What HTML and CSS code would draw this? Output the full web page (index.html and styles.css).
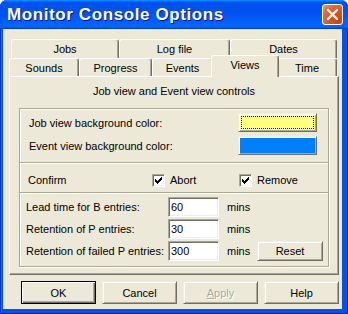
FILE: index.html
```html
<!DOCTYPE html>
<html lang="en">
<head>
    <meta charset="UTF-8">
    <title>Monitor Console Options</title>
    <link rel="stylesheet" href="styles.css">
</head>
<body>

<div class="window">
    <div class="titlebar">
        <span class="title">Monitor Console Options</span>
        <button class="close" title="Close">
            <svg width="13" height="13" viewBox="0 0 13 13">
                <path d="M2 2 L11 11 M11 2 L2 11" stroke="#fff" stroke-width="2.4" stroke-linecap="round" fill="none"/>
            </svg>
        </button>
    </div>

    <div class="client">
        <div class="tab-row back">
            <div class="tab t-jobs">Jobs</div>
            <div class="tab t-log">Log file</div>
            <div class="tab t-dates">Dates</div>
        </div>
        <div class="tab-row front">
            <div class="tab t-sounds">Sounds</div>
            <div class="tab t-progress">Progress</div>
            <div class="tab t-events">Events</div>
            <div class="tab active">Views</div>
            <div class="tab t-time">Time</div>
        </div>

        <div class="panel">
            <div class="caption">Job view and Event view controls</div>

            <div class="frame">
                <div class="section colors">
                    <div class="color-row">
                        <span>Job view background color:</span>
                        <button class="swatch yellow"><span class="focus"></span></button>
                    </div>
                    <div class="color-row">
                        <span>Event view background color:</span>
                        <button class="swatch blue"></button>
                    </div>
                </div>

                <div class="section confirm">
                    <span>Confirm</span>
                    <label class="check">
                        <span class="box"><svg width="7" height="7" viewBox="0 0 7 7"><path d="M0 2h1v3h-1z M1 3h1v3h-1z M2 4h1v3h-1z M3 3h1v3h-1z M4 2h1v3h-1z M5 1h1v3h-1z M6 0h1v3h-1z" fill="#000"/></svg></span>
                        Abort
                    </label>
                    <label class="check">
                        <span class="box"><svg width="7" height="7" viewBox="0 0 7 7"><path d="M0 2h1v3h-1z M1 3h1v3h-1z M2 4h1v3h-1z M3 3h1v3h-1z M4 2h1v3h-1z M5 1h1v3h-1z M6 0h1v3h-1z" fill="#000"/></svg></span>
                        Remove
                    </label>
                </div>

                <div class="section times">
                    <div class="time-row">
                        <span>Lead time for B entries:</span>
                        <input type="text" value="60">
                        <span class="unit">mins</span>
                    </div>
                    <div class="time-row">
                        <span>Retention of P entries:</span>
                        <input type="text" value="30">
                        <span class="unit">mins</span>
                    </div>
                    <div class="time-row">
                        <span>Retention of failed P entries:</span>
                        <input type="text" value="300">
                        <span class="unit">mins</span>
                        <button class="btn reset">Reset</button>
                    </div>
                </div>
            </div>
        </div>

        <div class="buttons">
            <button class="btn default">OK</button>
            <button class="btn">Cancel</button>
            <button class="btn disabled"><u>A</u>pply</button>
            <button class="btn">Help</button>
        </div>
    </div>
</div>

</body>
</html>
```

FILE: styles.css
```css
* {
    box-sizing: border-box;
}
body {
    margin: 0;
    background: #fff;
    font-family: "Liberation Sans", Arial, sans-serif;
    font-size: 11px;
    color: #000;
}
button, input {
    font-family: inherit;
    font-size: 11px;
    color: #000;
    margin: 0;
}
.window {
    width: 348px;
    height: 314px;
    display: flex;
    flex-direction: column;
    background: #0054e3;
    border-radius: 7px 7px 0 0;
    box-shadow: inset 1px 0 #0831d9, inset -1px -1px #00138c, inset 2px 0 #166aee;
    overflow: hidden;
}
.titlebar {
    height: 29px;
    flex: none;
    display: flex;
    align-items: center;
    justify-content: space-between;
    padding: 0 5px 0 7px;
    border-radius: 7px 7px 0 0;
    background: linear-gradient(180deg, #0997ff, #0053ee 8%, #0050ee 40%, #0066ff 88%, #0066ff 93%, #005bff 95%, #003dd7 96%, #003dd7);
}
.title {
    color: #fff;
    font-weight: bold;
    font-size: 17px;
    text-shadow: 1px 1px #0f1089;
    letter-spacing: 0.6px;
}
.close {
    width: 21px;
    height: 21px;
    padding: 0;
    display: flex;
    align-items: center;
    justify-content: center;
    border: 1px solid #fff;
    border-radius: 3px;
    background: radial-gradient(circle at 85% 85%, #cc4600 0, #dc5a2a 55%, #e0774a 80%, #f3a27c 100%);
}
.client {
    flex: 1;
    margin: 0 6px 5px 3px;
    padding: 10px 3px 0 6px;
    background: #ece9d8;
}

/* tabs */
.tab-row {
    display: flex;
}
.tab-row.back {
    height: 19px;
    padding-left: 2px;
}
.tab-row.front {
    height: 18px;
    align-items: flex-end;
}
.tab {
    height: 100%;
    display: flex;
    align-items: center;
    justify-content: center;
    background: #ece9d8;
    border-top: 1px solid #fff;
    border-left: 1px solid #fff;
    border-right: 1px solid #716f64;
    border-radius: 3px 3px 0 0;
    box-shadow: inset -1px 0 #aca899;
}
.t-jobs { width: 108px; }
.t-log { width: 111px; }
.t-dates { width: 107px; }
.t-sounds { width: 70px; }
.t-progress { width: 73px; }
.t-events { width: 61px; }
.t-time { width: 60px; }
.tab.active {
    position: relative;
    z-index: 1;
    width: 68px;
    height: 22px;
    margin: 0 -2px -1px;
    align-items: flex-start;
    padding-top: 3px;
    line-height: 13px;
}
.panel {
    height: 199px;
    padding: 8px 9px 0;
    border: 1px solid;
    border-color: #fff #716f64 #716f64 #fff;
    box-shadow: inset -1px -1px #aca899;
}
.caption {
    height: 13px;
    line-height: 13px;
    text-align: center;
}

/* group frame */
.frame {
    margin-top: 10px;
    height: 159px;
    border: 1px solid #aca899;
    box-shadow: inset 1px 1px #fff, 1px 1px #fff;
}
.section + .section {
    border-top: 1px solid #aca899;
    box-shadow: inset 0 1px #fff;
}
.colors {
    height: 53px;
    padding: 4px 11px 0 9px;
    display: flex;
    flex-direction: column;
    gap: 4px;
}
.color-row {
    height: 19px;
    display: flex;
    align-items: center;
    justify-content: space-between;
}
.swatch {
    width: 79px;
    height: 19px;
    padding: 2px;
    border: 1px solid;
    border-color: #f1efe2 #716f64 #716f64 #f1efe2;
    box-shadow: inset 1px 1px #fff, inset -1px -1px #aca899;
}
.swatch.yellow {
    background: #ffff80;
}
.swatch.blue {
    background: #0080ff;
}
.focus {
    display: block;
    height: 100%;
    border: 1px dotted #000;
}
.confirm {
    height: 30px;
    padding: 6px 0 0 8px;
    display: grid;
    grid-template-columns: 124px 87px auto;
    align-items: center;
    line-height: 13px;
}
.check {
    display: flex;
    align-items: center;
    gap: 5px;
}
.box {
    width: 13px;
    height: 13px;
    display: flex;
    align-items: center;
    justify-content: center;
    background: #fff;
    border: 1px solid;
    border-color: #aca899 #fff #fff #aca899;
    box-shadow: inset 1px 1px #716f64, inset -1px -1px #f1efe2;
}
.times {
    height: 74px;
    padding: 4px 0 0 6px;
    display: flex;
    flex-direction: column;
    gap: 2px;
}
.time-row {
    height: 20px;
    display: grid;
    grid-template-columns: 142px 51px 38px 66px;
    align-items: center;
}
.time-row input {
    width: 51px;
    height: 20px;
    padding: 0 2px;
    background: #fff;
    border: 1px solid;
    border-color: #aca899 #fff #fff #aca899;
    box-shadow: inset 1px 1px #716f64, inset -1px -1px #f1efe2;
    outline: none;
}
.unit {
    padding-left: 8px;
}

/* buttons */
.btn {
    width: 75px;
    height: 23px;
    padding: 0;
    background: #ece9d8;
    border: 1px solid;
    border-color: #f1efe2 #716f64 #716f64 #f1efe2;
    box-shadow: inset 1px 1px #fff, inset -1px -1px #aca899;
}
.btn.reset {
    width: 66px;
    height: 20px;
}
.btn.default {
    border-color: #000;
    box-shadow: inset 1px 1px #fff, inset -1px -1px #716f64, inset -2px -2px #aca899;
}
.btn.disabled {
    color: #aca899;
    text-shadow: 1px 1px #fff;
}
.buttons {
    margin-top: 6px;
    display: flex;
    justify-content: flex-end;
    gap: 6px;
}
```
